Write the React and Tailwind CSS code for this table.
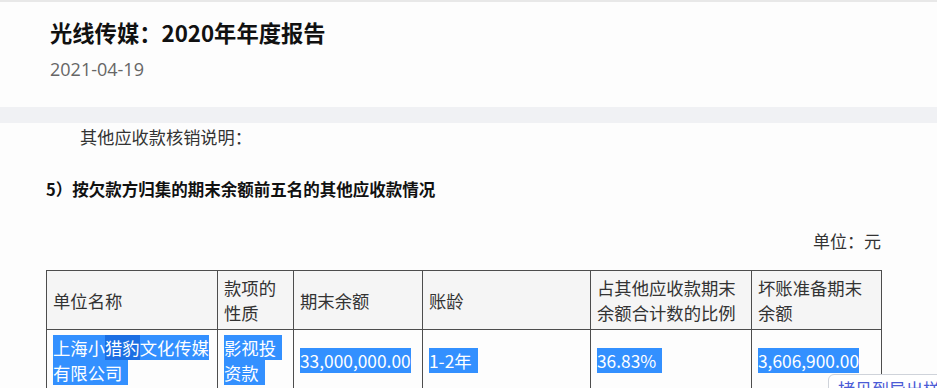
const cjk = "font-['Noto_Sans_CJK_SC','Noto_Sans',sans-serif]";

const columns = [
    { width: "171px", title: "单位名称" },
    { width: "76px", title: "款项的性质" },
    { width: "129px", title: "期末余额" },
    { width: "168px", title: "账龄" },
    { width: "161px", title: "占其他应收款期末余额合计数的比例" },
    { width: "130px", title: "坏账准备期末余额" },
];

function Sel({ children, extra = false, dark = false }) {
    return (
        <span className={`${dark ? "bg-[#1c6fe3]" : "bg-[#3390ff]"} text-white ${extra ? "pr-[6px]" : ""}`}>
            {children}
        </span>
    );
}

function App() {
    return (
        <div className={`relative w-full min-h-[388px] overflow-hidden bg-[#fdfdfd] ${cjk}`}>
            <div className="border-t-2 border-[#e8e8e8] px-[50px] pt-[15px] pb-[25px]">
                <h1 className="text-[22.3px] leading-[30px] font-bold text-[#111]">光线传媒：2020年年度报告</h1>
                <div className="mt-[9px] text-[18px] leading-[26px] text-[#666] font-['Open_Sans','Noto_Sans_CJK_SC',sans-serif]">
                    2021-04-19
                </div>
            </div>

            <div className="h-[16px] bg-[#f0f1f4]"></div>

            <div className="px-[46px] pt-[2px] text-[#333]">
                <p className="pl-[34px] text-[17.2px] leading-[24px]">其他应收款核销说明：</p>

                <h2 className="mt-[28px] text-[16.5px] leading-[24px] font-bold text-[#111]">
                    5）按欠款方归集的期末余额前五名的其他应收款情况
                </h2>

                <div className="mt-[28px] pr-[10px] text-right text-[17px] leading-[24px]">单位：元</div>

                <table className="mt-[17px] w-[835px] table-fixed border-collapse text-[17.33px] leading-[25px]">
                    <colgroup>
                        {columns.map((col) => (
                            <col key={col.title} style={{ width: col.width }} />
                        ))}
                    </colgroup>
                    <thead>
                        <tr className="bg-[#f5f5f5]">
                            {columns.map((col) => (
                                <th key={col.title} className="border border-[#4d4d4d] px-[6px] py-[4px] text-left font-normal align-middle">
                                    {col.title}
                                </th>
                            ))}
                        </tr>
                    </thead>
                    <tbody>
                        <tr>
                            <td className="border border-[#4d4d4d] px-[6px] pt-[5px] pb-[6px] align-middle">
                                <Sel>上海小</Sel><Sel dark>猎豹</Sel><Sel>文化传媒</Sel><br />
                                <Sel extra>有限公司</Sel>
                            </td>
                            <td className="border border-[#4d4d4d] px-[6px] pt-[5px] pb-[6px] align-middle">
                                <Sel extra>影视投</Sel><br />
                                <Sel extra>资款</Sel>
                            </td>
                            <td className="border border-[#4d4d4d] px-[6px] align-middle">
                                <Sel>33,000,000.00</Sel>
                            </td>
                            <td className="border border-[#4d4d4d] px-[6px] align-middle">
                                <Sel extra>1-2年</Sel>
                            </td>
                            <td className="border border-[#4d4d4d] px-[6px] align-middle">
                                <Sel extra>36.83%</Sel>
                            </td>
                            <td className="border border-[#4d4d4d] px-[6px] align-middle">
                                <Sel>3,606,900.00</Sel>
                            </td>
                        </tr>
                    </tbody>
                </table>
            </div>

            {/* floating copy tip */}
            <div className="absolute left-[828px] top-[374px] w-[140px] rounded-[6px] border border-[#cfd3da] bg-white px-[9px] py-[2px] text-[17px] leading-[24px] whitespace-nowrap text-[#4b5bd6]">
                拷贝到导出样式
            </div>
        </div>
    );
}
export default App;
